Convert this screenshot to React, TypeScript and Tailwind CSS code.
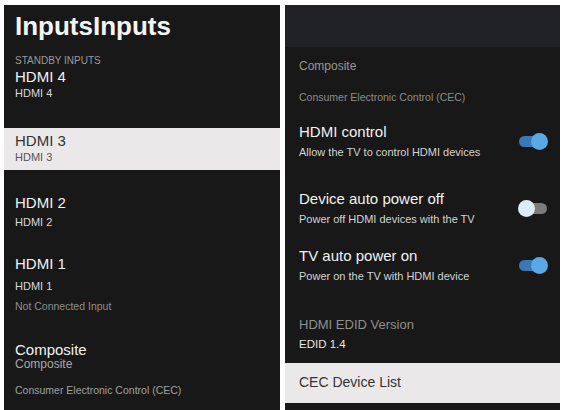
import React from 'react';

const font = "font-['Liberation_Sans',Arial,sans-serif]";

const Toggle: React.FC<{ on: boolean }> = ({ on }) => (
  <div className="relative w-[30px] h-[17px] shrink-0">
    <div
      className={
        on
          ? 'absolute left-[1px] top-[3px] w-[27px] h-[11px] rounded-full bg-[#3a78b8]'
          : 'absolute left-[2px] top-[3px] w-[27px] h-[11px] rounded-full bg-[#7b7b7b]'
      }
    />
    <div
      className={
        on
          ? 'absolute right-0 top-0 w-[17px] h-[17px] rounded-full bg-[#5aa8e6]'
          : 'absolute left-0 top-0 w-[17px] h-[17px] rounded-full bg-[#d9ecf8]'
      }
    />
  </div>
);

const SettingRow: React.FC<{ title: string; sub: string; on: boolean; mt: string; gap: string }> = ({
  title,
  sub,
  on,
  mt,
  gap,
}) => (
  <div className={`flex items-center justify-between pl-[14px] pr-[12px] ${mt}`}>
    <div className="flex flex-col">
      <div className="text-[15px] leading-[18px] text-[#f2f2f2]">{title}</div>
      <div className={`text-[11px] leading-[14px] text-[#d4d4d4] ${gap}`}>{sub}</div>
    </div>
    <Toggle on={on} />
  </div>
);

const InputsPanel: React.FC = () => (
  <div className="w-[276px] h-[405px] bg-[#181818] flex flex-col pt-[7px]">
    <div className="pl-[11px] text-[26px] leading-[28px] font-bold text-[#f4f4f4]">InputsInputs</div>
    <div className="pl-[11px] mt-[14px] text-[10px] leading-[14px] text-[#9a9a9a]">STANDBY INPUTS</div>
    <div className="pl-[11px] text-[15px] leading-[18px] text-[#f2f2f2]">HDMI 4</div>
    <div className="pl-[11px] text-[11px] leading-[14px] text-[#d8d8d8]">HDMI 4</div>

    <div className="mt-[28px] h-[42px] bg-[#ebe8ea] pl-[11px] pt-[4px] flex flex-col">
      <div className="text-[15px] leading-[18px] text-[#333333]">HDMI 3</div>
      <div className="text-[11px] leading-[14px] text-[#555555]">HDMI 3</div>
    </div>

    <div className="pl-[11px] mt-[24px] text-[15px] leading-[18px] text-[#f2f2f2]">HDMI 2</div>
    <div className="pl-[11px] mt-[3px] text-[11px] leading-[14px] text-[#d8d8d8]">HDMI 2</div>

    <div className="pl-[11px] mt-[26px] text-[15px] leading-[18px] text-[#f2f2f2]">HDMI 1</div>
    <div className="pl-[11px] mt-[6px] text-[11px] leading-[14px] text-[#d8d8d8]">HDMI 1</div>
    <div className="pl-[11px] mt-[6px] text-[10.5px] leading-[14px] text-[#8e8e8e]">Not Connected Input</div>

    <div className="pl-[11px] mt-[28px] text-[15px] leading-[17px] text-[#f2f2f2]">Composite</div>
    <div className="pl-[11px] text-[12px] leading-[13px] text-[#a8a8a8]">Composite</div>
    <div className="pl-[11px] mt-[12px] text-[10.5px] leading-[14px] text-[#a0a0a0]">
      Consumer Electronic Control (CEC)
    </div>
  </div>
);

const CecPanel: React.FC = () => (
  <div className="w-[275px] h-[405px] bg-[#181818] flex flex-col">
    <div className="h-[42px] bg-[#1f2124]" />
    <div className="pl-[14px] mt-[12px] text-[12px] leading-[14px] text-[#979797]">Composite</div>
    <div className="pl-[14px] mt-[17px] text-[10.5px] leading-[14px] text-[#8c8c8c]">
      Consumer Electronic Control (CEC)
    </div>

    <SettingRow title="HDMI control" sub="Allow the TV to control HDMI devices" on mt="mt-[19px]" gap="mt-[4px]" />
    <SettingRow
      title="Device auto power off"
      sub="Power off HDMI devices with the TV"
      on={false}
      mt="mt-[31px]"
      gap="mt-[4px]"
    />
    <SettingRow title="TV auto power on" sub="Power on the TV with HDMI device" on mt="mt-[21px]" gap="mt-[4px]" />

    <div className="pl-[14px] mt-[34px] text-[13px] leading-[16px] text-[#8f8f8f]">HDMI EDID Version</div>
    <div className="pl-[14px] mt-[4px] text-[11.5px] leading-[14px] text-[#e6e6e6]">EDID 1.4</div>

    <div className="mt-[12px] h-[40px] bg-[#ebe8ea] pl-[14px] pt-[11px]">
      <div className="text-[14px] leading-[16px] text-[#333333]">CEC Device List</div>
    </div>
  </div>
);

export default function App() {
  return (
    <div className={`w-[562px] h-[410px] bg-white flex pt-[5px] pl-[4px] gap-[5px] overflow-hidden ${font}`}>
      <InputsPanel />
      <CecPanel />
    </div>
  );
}
